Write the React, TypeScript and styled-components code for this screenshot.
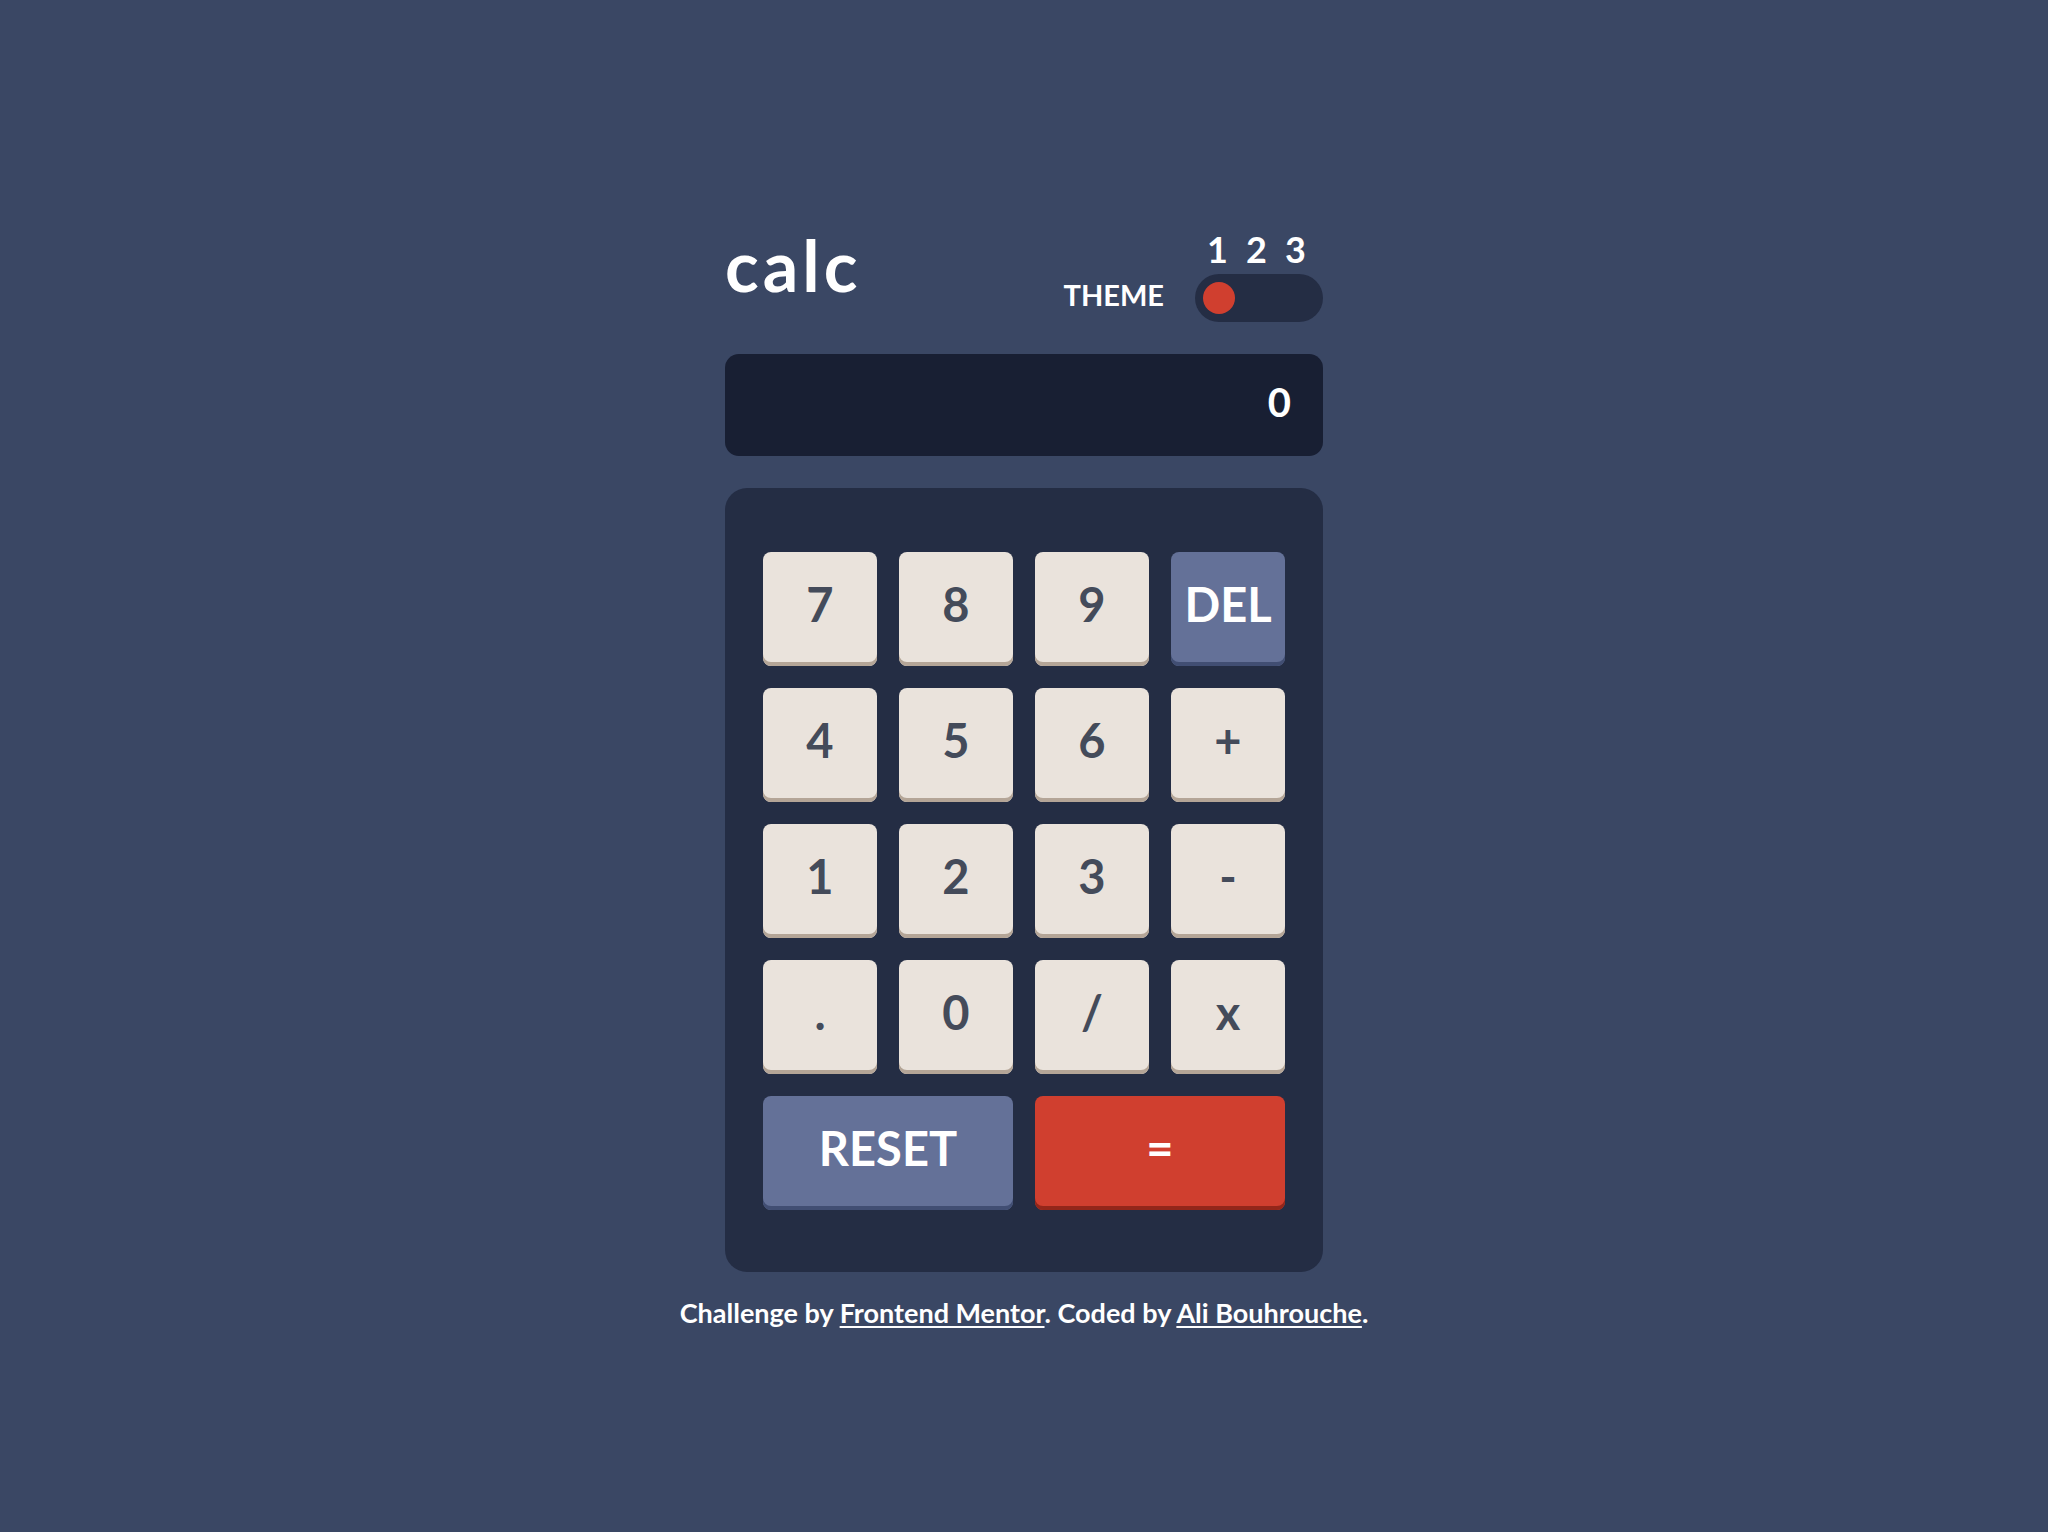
import React from "react";
import styled, { createGlobalStyle } from "styled-components";

const GlobalStyle = createGlobalStyle`
  html, body {
    margin: 0;
    padding: 0;
    background: #3a4764;
    font-family: Lato, "Open Sans", "Liberation Sans", sans-serif;
    font-weight: 700;
    color: #ffffff;
  }
  * { box-sizing: border-box; }
`;

const Page = styled.main`
  min-height: 100vh;
  display: flex;
  flex-direction: column;
  align-items: center;
  padding-top: 230px;
`;

const Calculator = styled.div`
  width: 598px;
  display: flex;
  flex-direction: column;
`;

const Header = styled.header`
  display: flex;
  justify-content: space-between;
  align-items: flex-end;
`;

const Title = styled.h1`
  margin: 0 0 22px 0;
  font-size: 70px;
  line-height: 1;
  font-weight: 700;
  letter-spacing: 4px;
`;

const ThemeGroup = styled.div`
  display: flex;
  align-items: flex-end;
  gap: 31px;
`;

const ThemeLabel = styled.span`
  font-size: 29px;
  line-height: 1;
  margin-bottom: 13px;
  letter-spacing: 0;
`;

const ToggleColumn = styled.div`
  display: flex;
  flex-direction: column;
`;

const Numbers = styled.div`
  display: grid;
  grid-template-columns: repeat(3, 39px);
  padding-left: 3px;
  margin-bottom: 7px;
  font-size: 36px;
  line-height: 1;
`;

const Num = styled.span`
  text-align: center;
`;

const Track = styled.div`
  width: 128px;
  height: 48px;
  border-radius: 24px;
  background: #242d44;
  padding: 8px;
  display: flex;
  align-items: center;
`;

const Knob = styled.div`
  width: 32px;
  height: 32px;
  border-radius: 50%;
  background: #d03f2f;
`;

const Screen = styled.div`
  margin-top: 32px;
  height: 102px;
  border-radius: 14px;
  background: #181f33;
  display: flex;
  align-items: center;
  justify-content: flex-end;
  padding: 0 32px 6px;
  font-size: 40px;
  line-height: 1;
`;

const Keypad = styled.div`
  margin-top: 32px;
  background: #242d44;
  border-radius: 22px;
  padding: 64px 38px 62px;
  display: grid;
  grid-template-columns: repeat(4, 1fr);
  grid-auto-rows: 114px;
  gap: 22px;
`;

type Variant = "num" | "fn" | "eq";

const palette: Record<Variant, { bg: string; shadow: string; color: string }> = {
  num: { bg: "#eae3dc", shadow: "#b4a597", color: "#444b5a" },
  fn: { bg: "#647198", shadow: "#414e73", color: "#ffffff" },
  eq: { bg: "#d03f2f", shadow: "#93261a", color: "#ffffff" },
};

const Key = styled.button<{ $variant: Variant; $span?: number }>`
  grid-column: span ${(p) => p.$span ?? 1};
  border: none;
  border-radius: 8px;
  background: ${(p) => palette[p.$variant].bg};
  color: ${(p) => palette[p.$variant].color};
  box-shadow: inset 0 -4px 0 ${(p) => palette[p.$variant].shadow};
  font-family: Lato, "Open Sans", "Liberation Sans", sans-serif;
  font-weight: 700;
  font-size: 47px;
  line-height: 1;
  display: flex;
  align-items: center;
  justify-content: center;
  padding: 0 0 10px 0;
  cursor: pointer;
`;

const Footer = styled.footer`
  margin-top: 25px;
  font-size: 27px;
  line-height: 1.2;
  text-align: center;
`;

const FooterLink = styled.a`
  color: #ffffff;
  text-decoration: underline;
  text-underline-offset: 3px;
`;

const keys: { label: string; variant: Variant; span?: number }[] = [
  { label: "7", variant: "num" },
  { label: "8", variant: "num" },
  { label: "9", variant: "num" },
  { label: "DEL", variant: "fn" },
  { label: "4", variant: "num" },
  { label: "5", variant: "num" },
  { label: "6", variant: "num" },
  { label: "+", variant: "num" },
  { label: "1", variant: "num" },
  { label: "2", variant: "num" },
  { label: "3", variant: "num" },
  { label: "-", variant: "num" },
  { label: ".", variant: "num" },
  { label: "0", variant: "num" },
  { label: "/", variant: "num" },
  { label: "x", variant: "num" },
  { label: "RESET", variant: "fn", span: 2 },
  { label: "=", variant: "eq", span: 2 },
];

export default function App() {
  return (
    <>
      <GlobalStyle />
      <Page>
        <Calculator>
          <Header>
            <Title>calc</Title>
            <ThemeGroup>
              <ThemeLabel>THEME</ThemeLabel>
              <ToggleColumn>
                <Numbers>
                  <Num>1</Num>
                  <Num>2</Num>
                  <Num>3</Num>
                </Numbers>
                <Track>
                  <Knob />
                </Track>
              </ToggleColumn>
            </ThemeGroup>
          </Header>
          <Screen>0</Screen>
          <Keypad>
            {keys.map((k) => (
              <Key key={k.label} $variant={k.variant} $span={k.span}>
                {k.label}
              </Key>
            ))}
          </Keypad>
        </Calculator>
        <Footer>
          Challenge by <FooterLink href="#">Frontend Mentor</FooterLink>. Coded by{" "}
          <FooterLink href="#">Ali Bouhrouche</FooterLink>.
        </Footer>
      </Page>
    </>
  );
}
